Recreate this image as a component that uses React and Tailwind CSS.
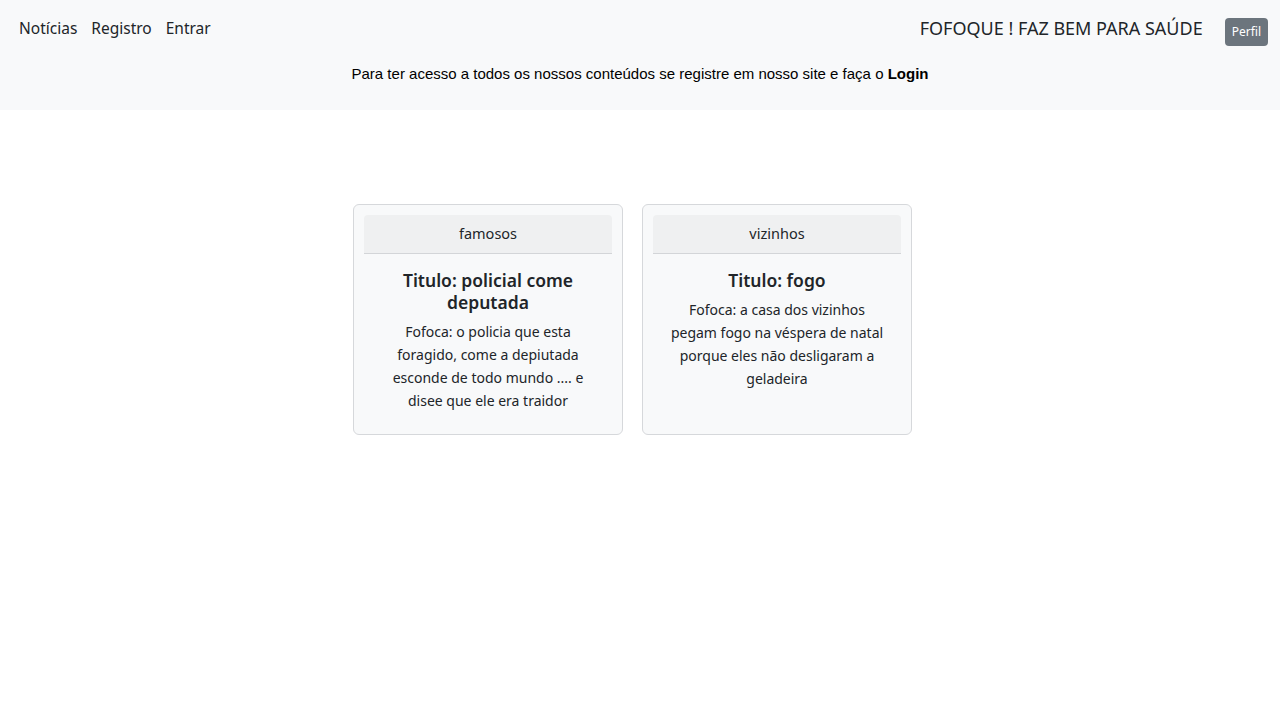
const Card = ({ tag, title, children }) => (
    <div className="w-[270px] h-[231px] rounded-md border border-[#d6d8db] bg-[#f8f9fa] p-[10px]">
        <div className="h-[39px] flex items-center justify-center bg-[#eff0f1] border-b border-[#d3d5d8] rounded-t text-[14.5px] text-[#212529]">
            {tag}
        </div>
        <div className="px-4 pt-[15px] text-center text-[#212529]">
            <h5 className="text-[17.5px] font-semibold leading-[22px] mb-[7px]">{title}</h5>
            <p className="text-[14px] leading-[23px]">{children}</p>
        </div>
    </div>
);

export default function App() {
    return (
        <div className="min-h-screen bg-white font-['Noto_Sans',sans-serif] text-[#212529]">
            <header className="bg-[#f8f9fa] h-[110px]">
                <nav className="flex items-start justify-between pl-[19px] pr-3 pt-[12px]">
                    <div className="flex gap-[14px] text-[15.5px] text-[#212529] h-[33px] items-center">
                        <a href="#">Notícias</a>
                        <a href="#">Registro</a>
                        <a href="#">Entrar</a>
                    </div>
                    <div className="flex items-start gap-[19px]">
                        <span className="text-[18px] mr-[3px] h-[32px] flex items-center">FOFOQUE ! FAZ BEM PARA SAÚDE</span>
                        <button className="bg-[#6c757d] text-white text-[12px] rounded px-[7px] h-[28px] mt-[6px]">Perfil</button>
                    </div>
                </nav>
                <p className="mt-[17px] text-center font-['Liberation_Sans',sans-serif] text-[15px] text-black">
                    Para ter acesso a todos os nossos conteúdos se registre em nosso site e faça o <b>Login</b>
                </p>
            </header>

            <main className="flex justify-center gap-[19px] pt-[94px] pr-[15px]">
                <Card tag="famosos" title="Titulo: policial come deputada">
                    Fofoca: o policia que esta foragido, come a depiutada esconde de todo mundo .... e disee que ele era traidor
                </Card>
                <Card tag="vizinhos" title="Titulo: fogo">
                    Fofoca: a casa dos vizinhos pegam fogo na véspera de natal porque eles não desligaram a geladeira
                </Card>
            </main>
        </div>
    );
}
